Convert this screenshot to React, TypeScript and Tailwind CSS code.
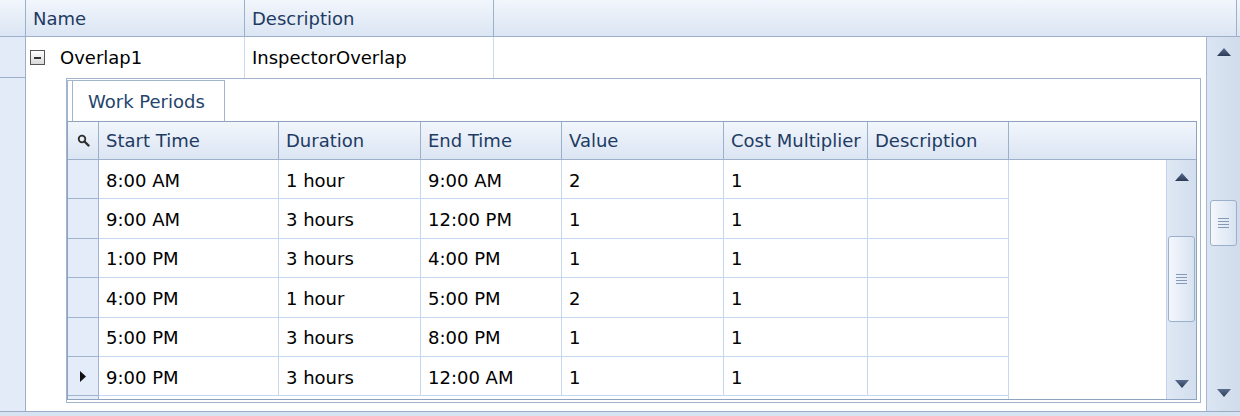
import React from 'react';

const periods = [
  { start: '8:00 AM', duration: '1 hour', end: '9:00 AM', value: '2', cost: '1' },
  { start: '9:00 AM', duration: '3 hours', end: '12:00 PM', value: '1', cost: '1' },
  { start: '1:00 PM', duration: '3 hours', end: '4:00 PM', value: '1', cost: '1' },
  { start: '4:00 PM', duration: '1 hour', end: '5:00 PM', value: '2', cost: '1' },
  { start: '5:00 PM', duration: '3 hours', end: '8:00 PM', value: '1', cost: '1' },
  { start: '9:00 PM', duration: '3 hours', end: '12:00 AM', value: '1', cost: '1' },
];

function Arrow({ dir }: { dir: 'up' | 'down' }) {
  return (
    <svg width="14" height="8" viewBox="0 0 14 8">
      <defs>
        <linearGradient id={`ag-${dir}`} x1="0" y1="0" x2="0" y2="1">
          <stop offset="0" stopColor="#5a6d8f" />
          <stop offset="1" stopColor="#2c3a55" />
        </linearGradient>
      </defs>
      <polygon points={dir === 'up' ? '7,0 14,8 0,8' : '0,0 14,0 7,8'} fill={`url(#ag-${dir})`} />
    </svg>
  );
}

function Thumb({ className }: { className: string }) {
  return (
    <div
      className={`mx-auto w-[27px] rounded-[3px] border border-[#9cb0ca] bg-linear-to-r from-[#f4f7fc] to-[#d8e3f1] flex flex-col items-center justify-center gap-[2px] ${className}`}
    >
      {[0, 1, 2, 3].map((i) => (
        <div key={i} className="h-px w-[11px] bg-[#8599b6]" />
      ))}
    </div>
  );
}

function SearchIcon() {
  return (
    <svg width="13" height="13" viewBox="0 0 13 13">
      <circle cx="5" cy="5" r="3.3" fill="#e8eef7" stroke="#2f2f2f" strokeWidth="1.8" />
      <line x1="7.5" y1="7.5" x2="11.5" y2="11.5" stroke="#2f2f2f" strokeWidth="2.4" strokeLinecap="round" />
    </svg>
  );
}

const cols = [
  { key: 'start', label: 'Start Time', w: 'w-[180px]' },
  { key: 'duration', label: 'Duration', w: 'w-[142px]' },
  { key: 'end', label: 'End Time', w: 'w-[141px]' },
  { key: 'value', label: 'Value', w: 'w-[162px]' },
  { key: 'cost', label: 'Cost Multiplier', w: 'w-[144px]' },
  { key: 'desc', label: 'Description', w: 'w-[141px]' },
] as const;

export default function App() {
  return (
    <div className="w-[1240px] h-[416px] overflow-hidden bg-white flex flex-col font-['DejaVu_Sans',sans-serif] text-[18px] text-black">
      {/* Master header */}
      <div className="h-[37px] shrink-0 flex border-b border-[#9db0ca] bg-linear-to-b from-[#f2f6fc] to-[#dbe5f3] text-[#1e3b63]">
        <div className="w-[26px] border-r border-[#9db0ca]" />
        <div className="w-[219px] border-r border-[#9db0ca] flex items-center pl-[7px]">Name</div>
        <div className="w-[249px] border-r border-[#9db0ca] flex items-center pl-[7px]">Description</div>
        <div className="flex-1 border-r border-[#9db0ca]" />
        <div className="w-[3px]" />
      </div>

      {/* Master body */}
      <div className="h-[374px] shrink-0 flex">
        {/* Row indicators */}
        <div className="w-[26px] bg-[#e2ebf7] border-r border-[#9db0ca]">
          <div className="h-[41px] border-b border-[#9db0ca]" />
        </div>

        <div className="flex-1 flex flex-col">
          {/* Master row */}
          <div className="h-[41px] flex">
            <div className="w-[219px] border-r border-[#cadaf0] flex items-center pl-[4px]">
              <div className="w-[15px] h-[15px] border border-[#555] bg-linear-to-b from-white to-[#d9d9d9] flex items-center justify-center">
                <div className="w-[7px] h-[2px] bg-[#333]" />
              </div>
              <span className="ml-[15px]">Overlap1</span>
            </div>
            <div className="w-[249px] border-r border-[#cadaf0] flex items-center pl-[7px]">InspectorOverlap</div>
          </div>

          {/* Detail */}
          <div className="flex-1 pl-[40px] pr-[5px] pb-[8px] flex">
            <div className="flex-1 border border-[#a3b5cd] flex flex-col">
              {/* Tabs */}
              <div className="h-[42px] flex items-end">
                <div className="w-[6px] h-[41px] border border-b-0 border-[#a3b5cd] bg-white" />
                <div className="w-[152px] h-[41px] border-t border-r border-[#a3b5cd] bg-white flex items-center pl-[15px] text-[#25446c]">
                  Work Periods
                </div>
              </div>

              {/* Detail grid */}
              <div className="h-[279px] mr-[3px] border border-[#8fa4c0] flex flex-col">
                <div className="h-[38px] flex border-b border-[#9db0ca] bg-linear-to-b from-[#f2f6fc] to-[#dbe5f3] text-[#1e3b63]">
                  <div className="w-[31px] border-r border-[#9db0ca] flex items-center justify-center">
                    <SearchIcon />
                  </div>
                  {cols.map((c) => (
                    <div key={c.key} className={`${c.w} border-r border-[#9db0ca] flex items-center pl-[7px] whitespace-nowrap`}>
                      {c.label}
                    </div>
                  ))}
                  <div className="flex-1" />
                </div>

                <div className="flex-1 flex">
                  <div className="flex flex-col">
                    {periods.map((p, i) => (
                      <div key={i} className="h-[39.4px] flex">
                        <div className="w-[31px] bg-[#e3ecf8] border-r border-b border-[#a0b4cf] flex items-center justify-center">
                          {i === periods.length - 1 && (
                            <svg width="6" height="11" viewBox="0 0 6 11">
                              <polygon points="0,0 6,5.5 0,11" fill="#111" />
                            </svg>
                          )}
                        </div>
                        {cols.map((c) => (
                          <div
                            key={c.key}
                            className={`${c.w} border-r border-b border-[#c6d8f0] flex items-center pl-[7px] pt-[2px] whitespace-nowrap`}
                          >
                            {c.key === 'desc' ? '' : p[c.key]}
                          </div>
                        ))}
                      </div>
                    ))}
                    <div className="flex-1 flex">
                      <div className="w-[31px] bg-[#e3ecf8] border-r border-[#a0b4cf]" />
                      <div className="w-[910px] border-r border-[#c6d8f0]" />
                    </div>
                  </div>
                  <div className="flex-1" />
                  {/* Detail scrollbar */}
                  <div className="w-[30px] bg-linear-to-r from-[#dfe8f4] to-[#d2deee] border-l border-[#c3d2e6] flex flex-col">
                    <div className="h-[34px] flex items-center justify-center">
                      <Arrow dir="up" />
                    </div>
                    <Thumb className="mt-[42px] h-[86px]" />
                    <div className="flex-1" />
                    <div className="h-[30px] flex items-center justify-center">
                      <Arrow dir="down" />
                    </div>
                  </div>
                </div>
              </div>
            </div>
          </div>
        </div>

        {/* Master scrollbar */}
        <div className="w-[34px] bg-linear-to-r from-[#dbe5f2] to-[#d0dcec] border-l border-[#a6b8d0] flex flex-col">
          <div className="h-[30px] flex items-center justify-center">
            <Arrow dir="up" />
          </div>
          <Thumb className="mt-[133px] h-[46px]" />
          <div className="flex-1" />
          <div className="h-[36px] flex items-center justify-center">
            <Arrow dir="down" />
          </div>
        </div>
      </div>

      {/* Bottom edge */}
      <div className="flex-1 border-t border-[#99adc8] bg-[#d8e3f1]" />
    </div>
  );
}
